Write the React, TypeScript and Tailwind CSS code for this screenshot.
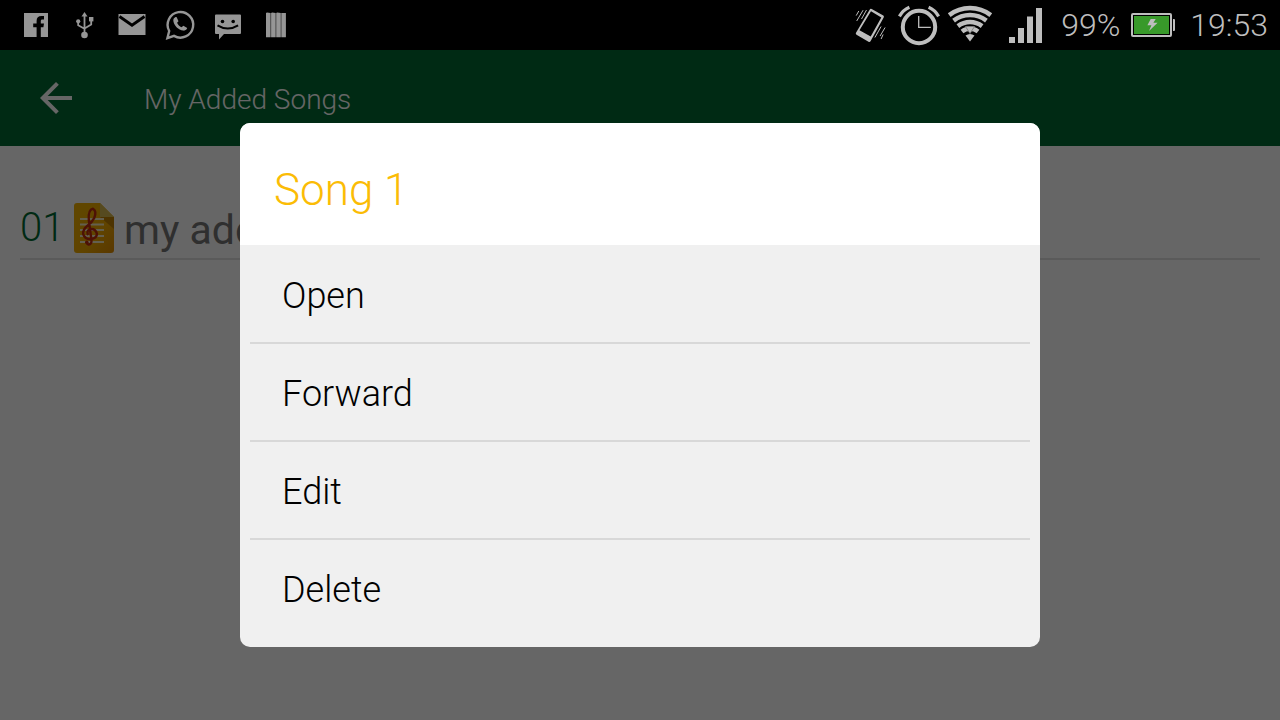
import type { ReactNode } from "react";
import { MdArrowBack } from "react-icons/md";

function StatusIcon({ label, children }: { label: string; children: ReactNode }) {
  return (
    <svg viewBox="0 0 48 50" className="h-[50px] w-12 shrink-0" fill="currentColor" role="img" aria-label={label}>
      {children}
    </svg>
  );
}

function Notifications() {
  return (
    <div className="flex items-center text-[#969696]">
      <StatusIcon label="Facebook">
        <path d="M12 13h24v24h-7.2V27.2h2.6l.6-3.8h-3.2v-2.2c0-1.2.4-1.7 1.6-1.7H32v-3.6h-2.4c-3.4 0-5 1.8-5 5v2.5h-3.4v3.8h3.4V37H12z" />
      </StatusIcon>
      <StatusIcon label="USB">
        <circle cx="24.5" cy="35" r="3.3" />
        <path d="M24.5 12l3 4.6h-6z" />
        <circle cx="18.2" cy="21.3" r="2.1" />
        <path d="M29 17h4.4v4.4H29z" />
        <path d="M24.5 15v19M18.2 21v4.2l6.3 3.6M31.2 21v3.4l-6.7 4" fill="none" stroke="currentColor" strokeWidth="1.8" />
      </StatusIcon>
      <StatusIcon label="Mail">
        <path d="M10.5 14h27v21h-27z" />
        <path d="M11.5 16.5L24 25.2l12.5-8.7" fill="none" stroke="black" strokeWidth="2.8" />
      </StatusIcon>
      <StatusIcon label="WhatsApp">
        <path
          d="M11.4 38.2l1.800-7.200a12.800 12.800 0 1 1 4.800 4.900z"
          fill="none"
          stroke="currentColor"
          strokeWidth="2.4"
          strokeLinejoin="miter"
        />
        <path d="M19.2 17.3c-1.5.7-2.1 2.1-1.800 3.900.8 4.600 5 8.800 9.800 9.400 2 .3 3.700-.8 4-2.500l-3.800-2.300-1.900 1.500c-2-.9-3.500-2.400-4.400-4.500l1.400-1.600-1.700-3.800c-.4-.3-1-.4-1.600-.1z" />
      </StatusIcon>
      <StatusIcon label="Message">
        <path d="M12 14.5h24q1 0 1 1V33q0 1-1 1H20l-5 5.400V34h-3q-1 0-1-1V15.500q0-1 1-1z" />
        <circle cx="18.500" cy="21.500" r="1.800" fill="black" />
        <circle cx="29.200" cy="21.500" r="1.800" fill="black" />
        <path d="M13.500 25.400q10.300 6.400 20.600 0" fill="none" stroke="black" strokeWidth="2" />
      </StatusIcon>
      <StatusIcon label="Signal bars">
        <path d="M14 13l1-.5 3.600.5v24.200H14zM19.100 13l1-.5 3.600.5v24.200h-4.600zM24.200 13l1-.5 3.600.5v24.200h-4.600zM29.300 13h4.600v24.200h-4.600z" />
      </StatusIcon>
    </div>
  );
}

function SystemStatus() {
  return (
    <div className="flex items-center text-[32px] leading-[50px] font-light text-[#bebebe]">
      <StatusIcon label="Vibrate">
        <g transform="translate(-1.500 0)">
          <path
            fillRule="evenodd"
            d="M24.600 9q.8-.4 1.600 0l11.600 6.600q1 .8.4 1.800L25 41.200q-.7 1.200-2 .5l-12-7q-1.200-.8-.5-2zM25.500 11.200L14 30.300l11.200 6.200L35.800 17.400z"
          />
          <path
            d="M13.300 11l-2.600 4.600M17.600 10.200L11.200 21M21 10l-5 9M39.600 27.500l-5 8.500M37.600 34.500l-2 4.500M35.600 26.500L29.400 37.500"
            fill="none"
            stroke="currentColor"
            strokeWidth="1"
          />
        </g>
      </StatusIcon>
      <StatusIcon label="Alarm">
        <circle cx="24" cy="27" r="16.200" fill="none" stroke="currentColor" strokeWidth="4" />
        <path d="M23.700 16v11.400h12.100" fill="none" stroke="currentColor" strokeWidth="1.300" />
        <path d="M4.400 16.400Q8 10 14.400 7.300M43.600 16.400Q40 10 33.600 7.300" fill="none" stroke="currentColor" strokeWidth="3.200" />
      </StatusIcon>
      <svg viewBox="0 0 56 50" className="mr-[3px] h-[50px] w-14" fill="none" stroke="currentColor" strokeWidth="4.500" role="img" aria-label="Wi-Fi">
        <path d="M6.200 15.100A34 34 0 0 1 47.800 15.100M10.600 20.600A27 27 0 0 1 43.400 20.600M14.900 26.100A20 20 0 0 1 39.100 26.100M19 31.400A13 13 0 0 1 35 31.400" />
        <path d="M22.500 35.600Q27 32.200 31.500 35.600L27 41.500z" fill="currentColor" stroke="none" />
        <path d="M22.500 26.500h9L27 33.500z" fill="currentColor" stroke="#777" strokeWidth=".8" />
      </svg>
      <StatusIcon label="Mobile signal">
        <path d="M7 37h6v6H7zM16 28h6v15h-6zM25 16.500h6V43h-6zM34 8h6v35h-6z" />
      </StatusIcon>
      <span className="ml-[11px]">99%</span>
      <svg viewBox="0 0 48 50" className="ml-[9px] h-[50px] w-12" role="img" aria-label="Battery charging">
        <rect x="3" y="14" width="39" height="22" rx="1" fill="black" stroke="currentColor" strokeWidth="2" />
        <path d="M5 16h35v18H5z" fill="#38992a" />
        <path d="M44 19h1q1 0 1 1v10q0 1-1 1h-1z" fill="currentColor" />
        <path d="M21.700 19h5l-2.300 3.700h4.200L20 31l2.400-5.700h-4z" fill="currentColor" />
      </svg>
      <time className="ml-[13px]">19:53</time>
    </div>
  );
}

function SongIcon() {
  return (
    <svg viewBox="0 0 40 50" className="h-[50px] w-10 shrink-0" aria-hidden="true">
      <defs>
        <linearGradient id="sheet" x1="0" y1="0" x2="1" y2="1">
          <stop offset="0" stopColor="#f0b000" />
          <stop offset=".6" stopColor="#f0aa00" />
          <stop offset="1" stopColor="#e08c00" />
        </linearGradient>
      </defs>
      <path d="M3 0h23l14 14v33q0 3-3 3H3q-3 0-3-3V3q0-3 3-3z" fill="url(#sheet)" />
      <path d="M26 14h14v12z" fill="#c08000" />
      <path d="M26 0l14 14H26z" fill="#d8b850" />
      <path d="M6 15h24v2H6zM6 20.500h24v2H6zM6 26h24v2H6zM6 32h24v2H6zM6 38h24v2H6z" fill="#f8edc8" />
      <path
        d="M12.500 39.500q1.500 3.200 3.800 1.500 1.700-1.600 1-5L14.800 17q-.9-10 4.200-11.300 4 2.300 1.200 9.300-2 4.200-6.200 7.200-5.600 4.400-4.800 9 1.600 5.200 7.500 5 6.300-1 6.200-5.500-1.200-5-6-4.700-4.500 1-3.200 5.200"
        fill="none"
        stroke="#c02c10"
        strokeWidth="2.400"
        strokeLinecap="round"
      />
      <circle cx="12.800" cy="39.300" r="1.800" fill="#c02c10" />
    </svg>
  );
}

const actions = ["Open", "Forward", "Edit", "Delete"];

function SongMenu() {
  return (
    <div className="absolute inset-0 flex items-center justify-center bg-black/60">
      <section
        role="dialog"
        aria-modal="true"
        aria-labelledby="song-menu-title"
        className="w-5/8 overflow-hidden rounded-[10px] bg-[#f0f0f0]"
      >
        <h2 id="song-menu-title" className="bg-white px-[34px] pt-10 pb-7 text-[44px] leading-[54px] font-light text-[#fbbc05]">
          Song 1
        </h2>
        <ul className="divide-y-2 divide-[#d8d8d8] px-[10px] pt-px pb-[11px]">
          {actions.map((action) => (
            <li key={action}>
              <button type="button" className="block w-full px-8 pt-[26px] pb-[22px] text-left text-[36px] leading-[48px] font-light text-black">
                {action}
              </button>
            </li>
          ))}
        </ul>
      </section>
    </div>
  );
}

export default function App() {
  return (
    <div className="flex min-h-screen flex-col bg-white font-[Roboto,sans-serif]">
      <div className="flex items-center justify-between bg-black px-3">
        <Notifications />
        <SystemStatus />
      </div>
      <div className="relative flex-1">
        <header className="flex h-24 items-center gap-16 bg-[#006932] pl-8 text-white">
          <button type="button" aria-label="Back">
            <MdArrowBack size={48} />
          </button>
          <h1 className="pt-1 text-[28px] leading-9 font-light">My Added Songs</h1>
        </header>
        <main className="px-5 pt-[52px]">
          <ul>
            <li className="flex h-[62px] items-center border-b-2 border-[#e0e0e0]">
              <span className="w-[54px] text-[40px] leading-[50px] font-light text-[#006932]">01</span>
              <SongIcon />
              <a href="#song-1" className="ml-[10px] pt-1 text-[41px] leading-[50px] text-[#757575]">
                my added
              </a>
            </li>
          </ul>
        </main>
        <SongMenu />
      </div>
    </div>
  );
}
